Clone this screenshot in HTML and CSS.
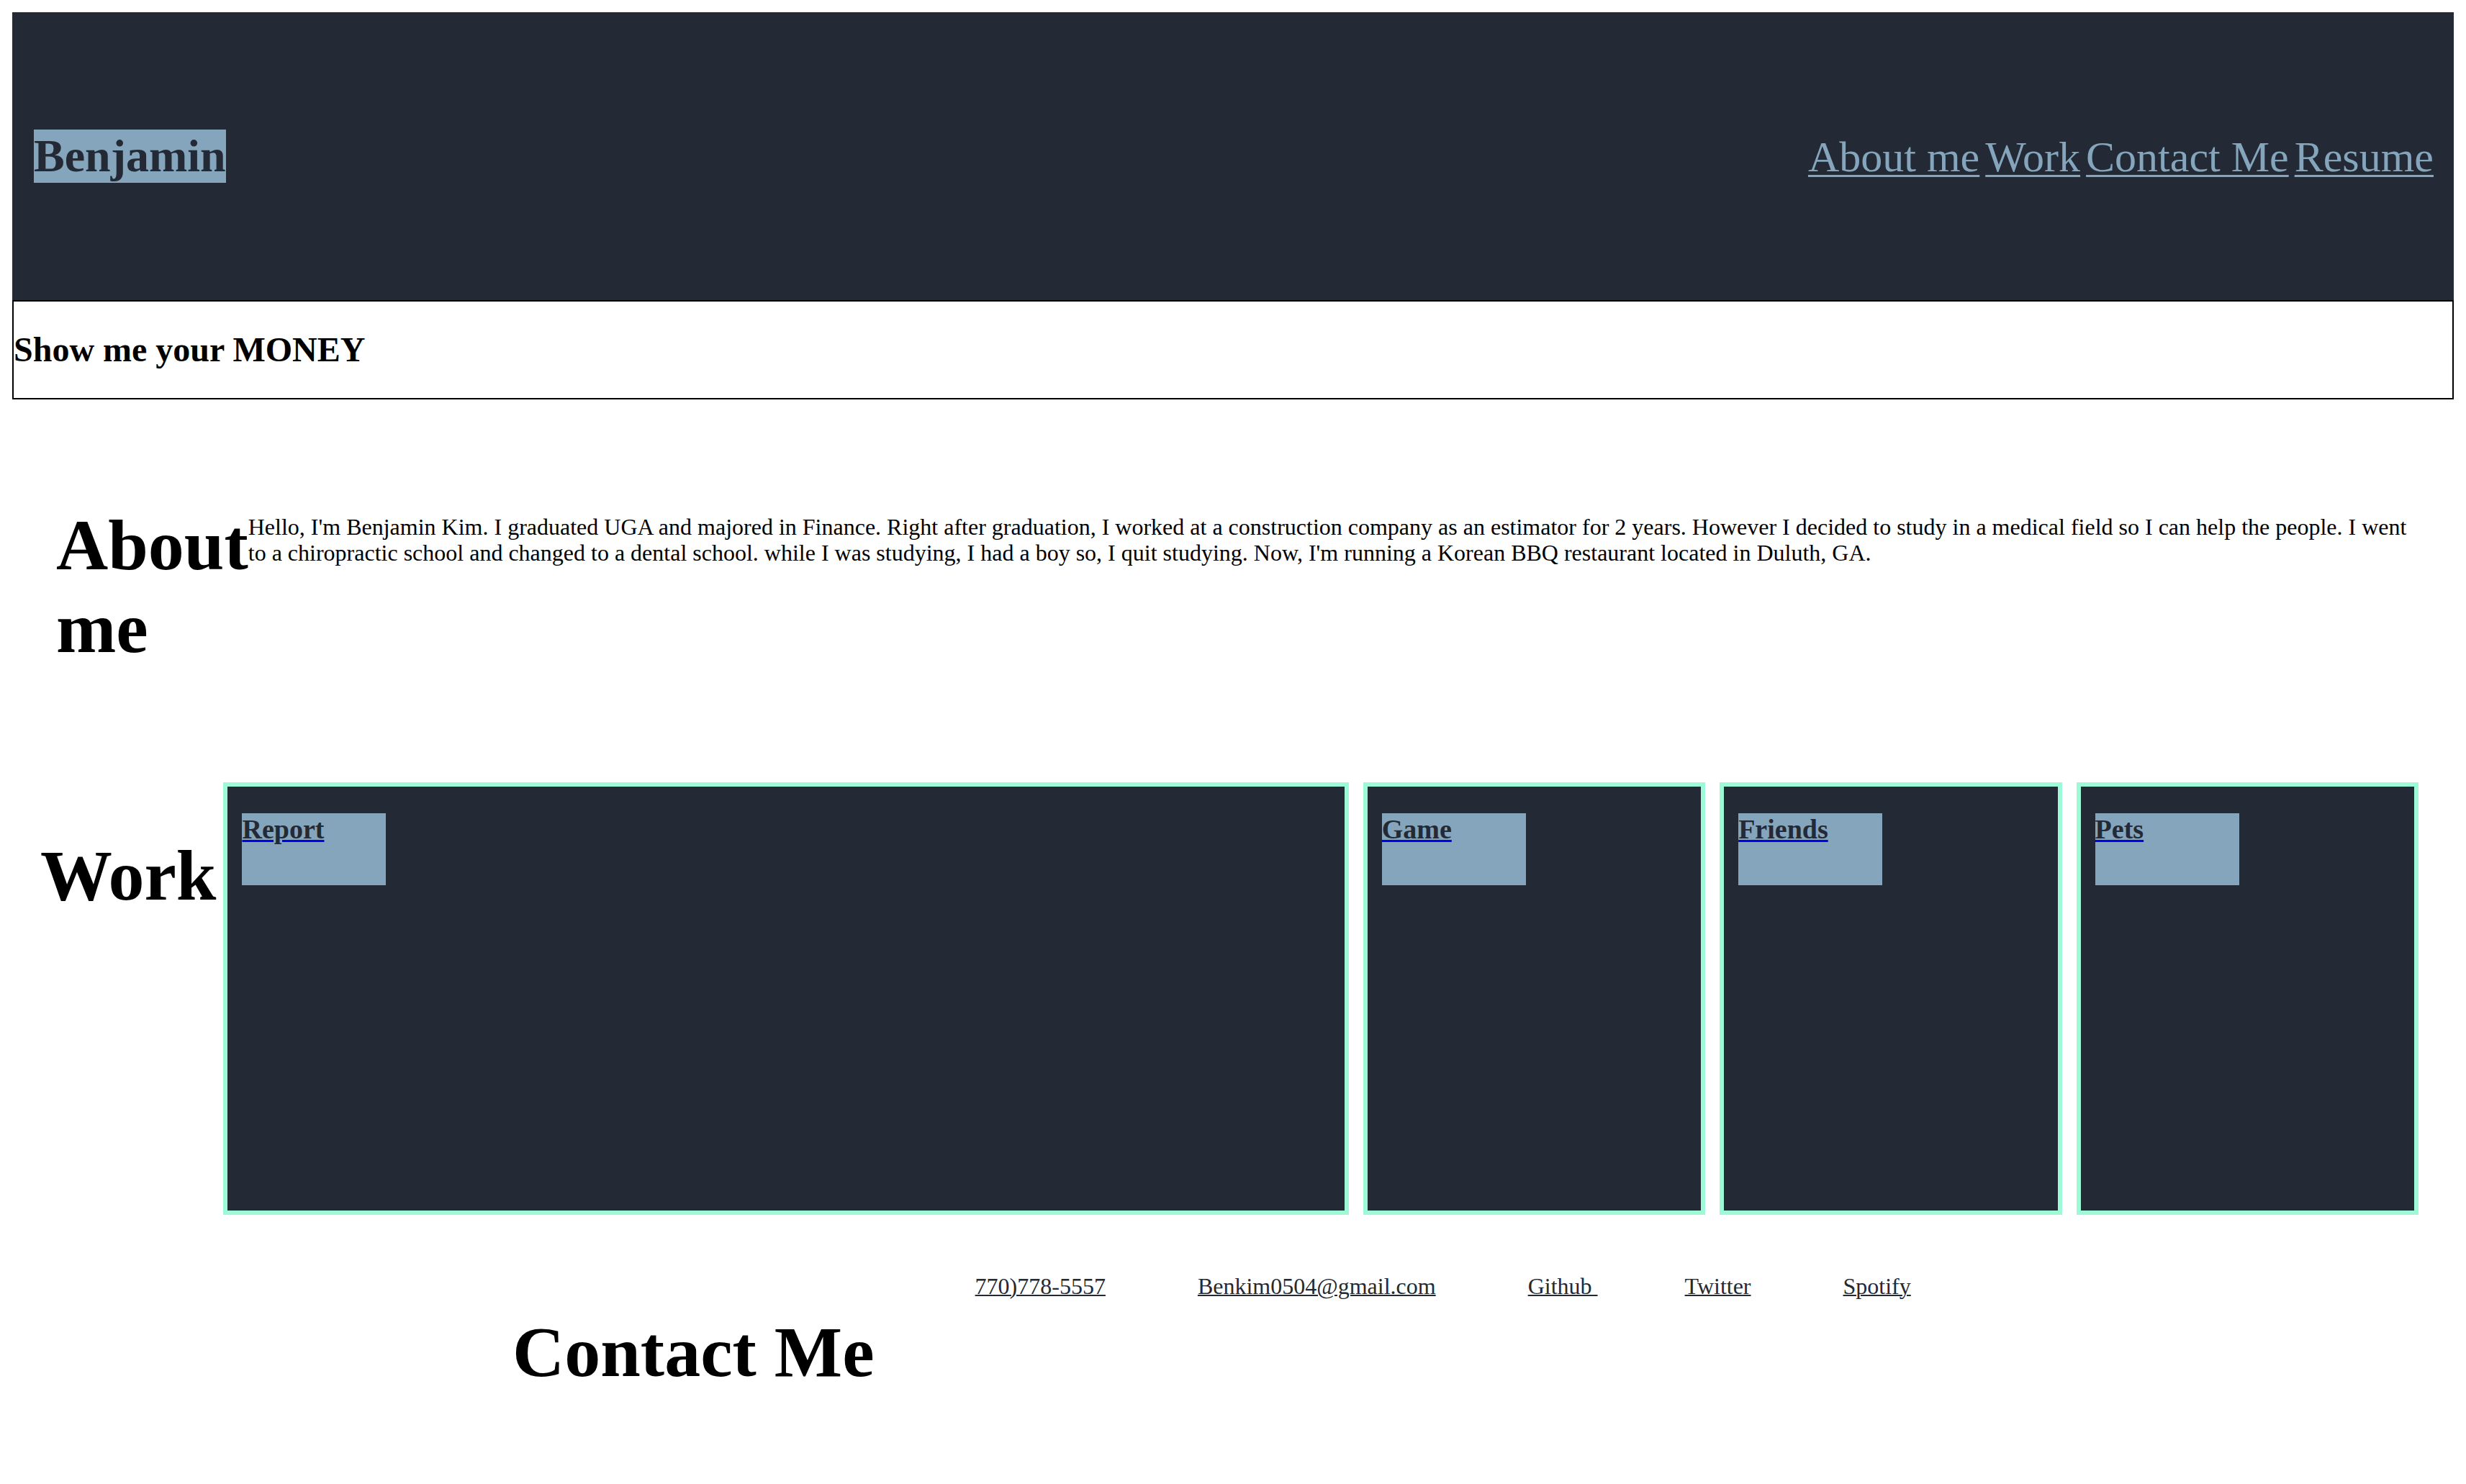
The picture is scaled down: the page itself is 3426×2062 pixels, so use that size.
FILE: index.html
```html
<!DOCTYPE html>
<html lang="en">
<head>
<meta charset="utf-8">
<title>Benjamin</title>
<link rel="stylesheet" href="styles.css">
</head>
<body>
<header class="topbar">
  <h1 class="brand">Benjamin</h1>
  <nav class="nav">
    <a class="nav-link" href="#about">About me</a>
    <a class="nav-link" href="#work">Work</a>
    <a class="nav-link" href="#contact">Contact Me</a>
    <a class="nav-link" href="#resume">Resume</a>
  </nav>
</header>
<div class="tagline">
  <h2 class="tagline-text">Show me your MONEY</h2>
</div>
<section class="about" id="about">
  <h2 class="section-title about-title">About me</h2>
  <p class="about-text">Hello, I'm Benjamin Kim. I graduated UGA and majored in Finance. Right after graduation, I worked at a construction company as an estimator for 2 years. However I decided to study in a medical field so I can help the people. I went to a chiropractic school and changed to a dental school. while I was studying, I had a boy so, I quit studying. Now, I'm running a Korean BBQ restaurant located in Duluth, GA.</p>
</section>
<section class="work" id="work">
  <h2 class="section-title work-title">Work</h2>
  <div class="cards">
    <div class="card"><a class="card-link" href="#"><h3 class="card-label">Report</h3></a></div>
    <div class="card"><a class="card-link" href="#"><h3 class="card-label">Game</h3></a></div>
    <div class="card"><a class="card-link" href="#"><h3 class="card-label">Friends</h3></a></div>
    <div class="card"><a class="card-link" href="#"><h3 class="card-label">Pets</h3></a></div>
  </div>
</section>
<section class="contact" id="contact">
  <h2 class="section-title contact-title">Contact Me</h2>
  <div class="contact-links">
    <a class="contact-link" href="#">770)778-5557</a>
    <a class="contact-link" href="#">Benkim0504@gmail.com</a>
    <a class="contact-link contact-link-tight" href="#">Github&nbsp;</a>
    <a class="contact-link" href="#">Twitter</a>
    <a class="contact-link" href="#">Spotify</a>
  </div>
</section>
</body>
</html>
```
FILE: styles.css
```css
html, body {
  background: #ffffff;
}

body {
  margin: 17px;
  font-family: "Liberation Serif", "Times New Roman", serif;
  color: #000000;
}

.topbar {
  display: flex;
  justify-content: space-between;
  align-items: center;
  height: 400px;
  background: #232a35;
  padding: 0 28px 0 30px;
  box-sizing: border-box;
}

.brand {
  margin: 0;
  font-size: 64px;
  line-height: 74px;
  font-weight: bold;
  color: #232a35;
  background: #84a5bc;
}

.nav {
  display: flex;
  gap: 8px;
  font-size: 60px;
  line-height: 70px;
  padding-top: 2px;
}

.nav-link {
  color: #84a5bc;
  text-decoration: underline;
  text-decoration-thickness: 3px;
  text-underline-offset: 5px;
}

.tagline {
  border: 2px solid #000000;
}

.tagline-text {
  margin: 39px 0 40px;
  font-size: 48px;
  line-height: 55px;
  font-weight: bold;
}

.section-title {
  margin: 0;
  font-size: 100px;
  line-height: 115px;
  font-weight: bold;
}

.about {
  display: flex;
  align-items: flex-start;
  padding: 145px 61px 157px 61px;
}

.about-title {
  width: min-content;
  flex: none;
}

.about-text {
  margin: 14px 0 0 0;
  font-size: 32px;
  line-height: 36px;
}

.work {
  display: flex;
  align-items: flex-start;
  padding: 0 49px 0 39px;
}

.work-title {
  flex: none;
  margin: 72px 10px 0 0;
}

.cards {
  flex: 1;
  display: grid;
  grid-template-columns: 3.288fr 1fr 1fr 1fr;
  gap: 20px;
}

.card {
  height: 601px;
  box-sizing: border-box;
  border: 6px solid #9efad6;
  background: #232a35;
  padding: 37px 20px;
}

.card-link {
  color: #0000ee;
  text-decoration: underline;
  text-decoration-color: #0000ee;
  text-decoration-thickness: 3px;
}

.card-label {
  margin: 0;
  width: 200px;
  height: 100px;
  background: #84a5bc;
  color: #232a35;
  font-size: 38px;
  line-height: 44px;
  font-weight: bold;
}

.contact {
  display: flex;
  align-items: flex-start;
  padding: 81px 0 0 695px;
}

.contact-title {
  flex: none;
  margin: 52px 140px 0 0;
}

.contact-links {
  display: flex;
  gap: 128px;
  font-size: 32px;
  line-height: 36px;
}

.contact-link {
  color: #232a35;
  text-decoration: underline;
  text-decoration-thickness: 2px;
}

.contact-link-tight {
  margin-right: -7px;
}
```
